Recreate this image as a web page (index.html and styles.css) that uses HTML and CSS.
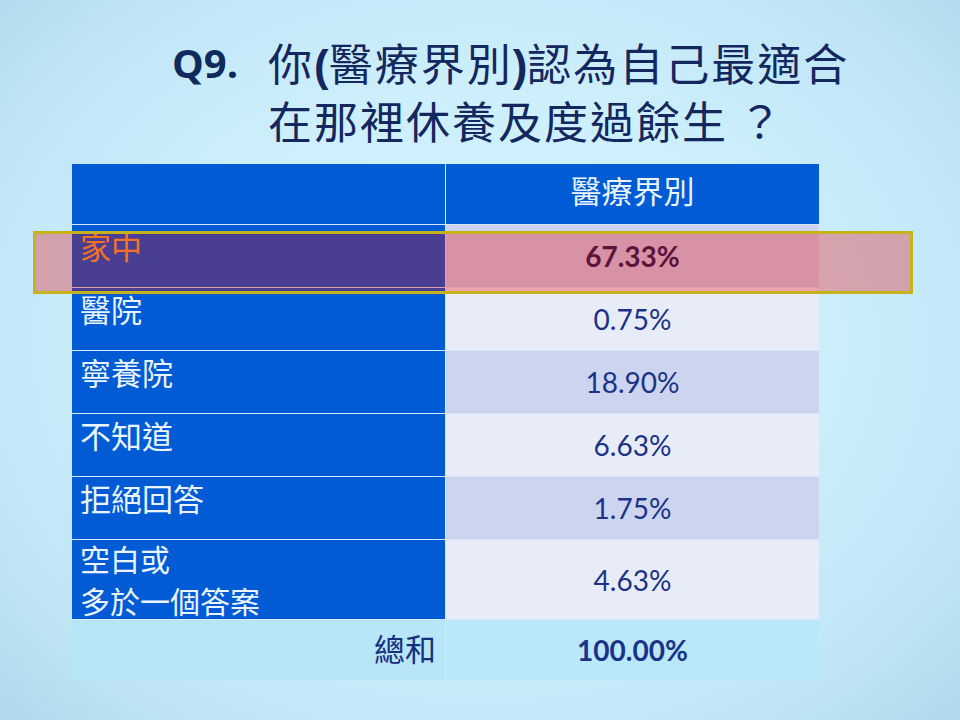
FILE: index.html
```html
<!DOCTYPE html>
<html lang="zh-Hant">
<head>
<meta charset="utf-8">
<title>Q9</title>
<link rel="stylesheet" href="styles.css">
</head>
<body>
<div class="slide">
  <div class="title">
    <div class="qnum">Q9.</div>
    <div class="qtext">
      <div class="line">你<span class="paren">(</span>醫療界別<span class="paren">)</span>認為自己最適合</div>
      <div class="line">在那裡休養及度過餘生<span class="qmark">？</span></div>
    </div>
  </div>
  <div class="tbl">
    <div class="cell head-l"></div>
    <div class="cell head-r">醫療界別</div>

    <div class="cell label home">家中</div>
    <div class="cell val dark bold">67.33%</div>

    <div class="cell label">醫院</div>
    <div class="cell val light">0.75%</div>

    <div class="cell label">寧養院</div>
    <div class="cell val dark">18.90%</div>

    <div class="cell label">不知道</div>
    <div class="cell val light">6.63%</div>

    <div class="cell label">拒絕回答</div>
    <div class="cell val dark">1.75%</div>

    <div class="cell label two"><div class="two-in">空白或<br>多於一個答案</div></div>
    <div class="cell val light">4.63%</div>

    <div class="cell total-l">總和</div>
    <div class="cell val total-r bold">100.00%</div>
  </div>
  <div class="highlight"></div>
</div>
</body>
</html>
```

FILE: styles.css
```css
html, body {
  margin: 0;
  padding: 0;
}
body {
  width: 960px;
  height: 720px;
  overflow: hidden;
}
.slide {
  position: relative;
  width: 960px;
  height: 720px;
  background: radial-gradient(ellipse 75% 80% at 50% 48%, #d3f3fe 0%, #cdeffc 45%, #bfe5f5 75%, #a9d3e6 100%);
  font-family: "Noto Sans CJK TC", "Noto Sans CJK SC", sans-serif;
  overflow: hidden;
}
.title {
  display: flex;
  padding: 35px 0 0 172px;
  color: #14275e;
}
.qnum {
  width: 96px;
  font-family: "Open Sans", "Liberation Sans", sans-serif;
  font-weight: 700;
  font-size: 40px;
  line-height: 55px;
  color: #102a5c;
}
.qtext {
  font-size: 44px;
  line-height: 55px;
  letter-spacing: 2px;
}
.line {
  white-space: nowrap;
}
.paren {
  font-family: "Liberation Sans", sans-serif;
  font-weight: 700;
  letter-spacing: 0;
}
.qmark {
  margin-left: 10px;
}
.tbl {
  margin: 16px 0 0 72px;
  width: 747px;
  display: grid;
  grid-template-columns: 373px 373px;
  grid-template-rows: 60px 62px 62px 62px 62px 62px 79px 60px;
  column-gap: 1px;
  row-gap: 1px;
  background: #d6e8fa;
}
.cell {
  box-sizing: border-box;
}
.head-l, .head-r, .label {
  background: #005bd4;
  color: #eaf4ff;
}
.head-r {
  font-size: 31px;
  line-height: 40px;
  padding-top: 6px;
  text-align: center;
}
.label {
  font-size: 31px;
  line-height: 40px;
  padding: 1px 0 0 8px;
}
.label.two {
  padding-top: 0;
  font-size: 30px;
  line-height: 42px;
}
.two-in {
  margin-top: -3px;
}
.home {
  color: #f7a633;
}
.val {
  display: flex;
  align-items: center;
  justify-content: center;
  font-family: Lato, "Open Sans", sans-serif;
  font-size: 28px;
  color: #1b3386;
}
.bold {
  font-weight: 700;
}
.dark.bold {
  color: #1a1c58;
}
.light {
  background: #e8ecf8;
}
.dark {
  background: #cdd4f0;
}
.total-l {
  background: #b8e6f9;
  color: #16307e;
  font-size: 31px;
  text-align: right;
  padding: 8px 9px 0 0;
  line-height: 40px;
}
.total-r {
  background: #b9e8fa;
}
.highlight {
  position: absolute;
  left: 33px;
  top: 231px;
  width: 880px;
  height: 63px;
  box-sizing: border-box;
  border: 3px solid #c6b31c;
  background: rgba(240, 0, 0, 0.31);
}
```
